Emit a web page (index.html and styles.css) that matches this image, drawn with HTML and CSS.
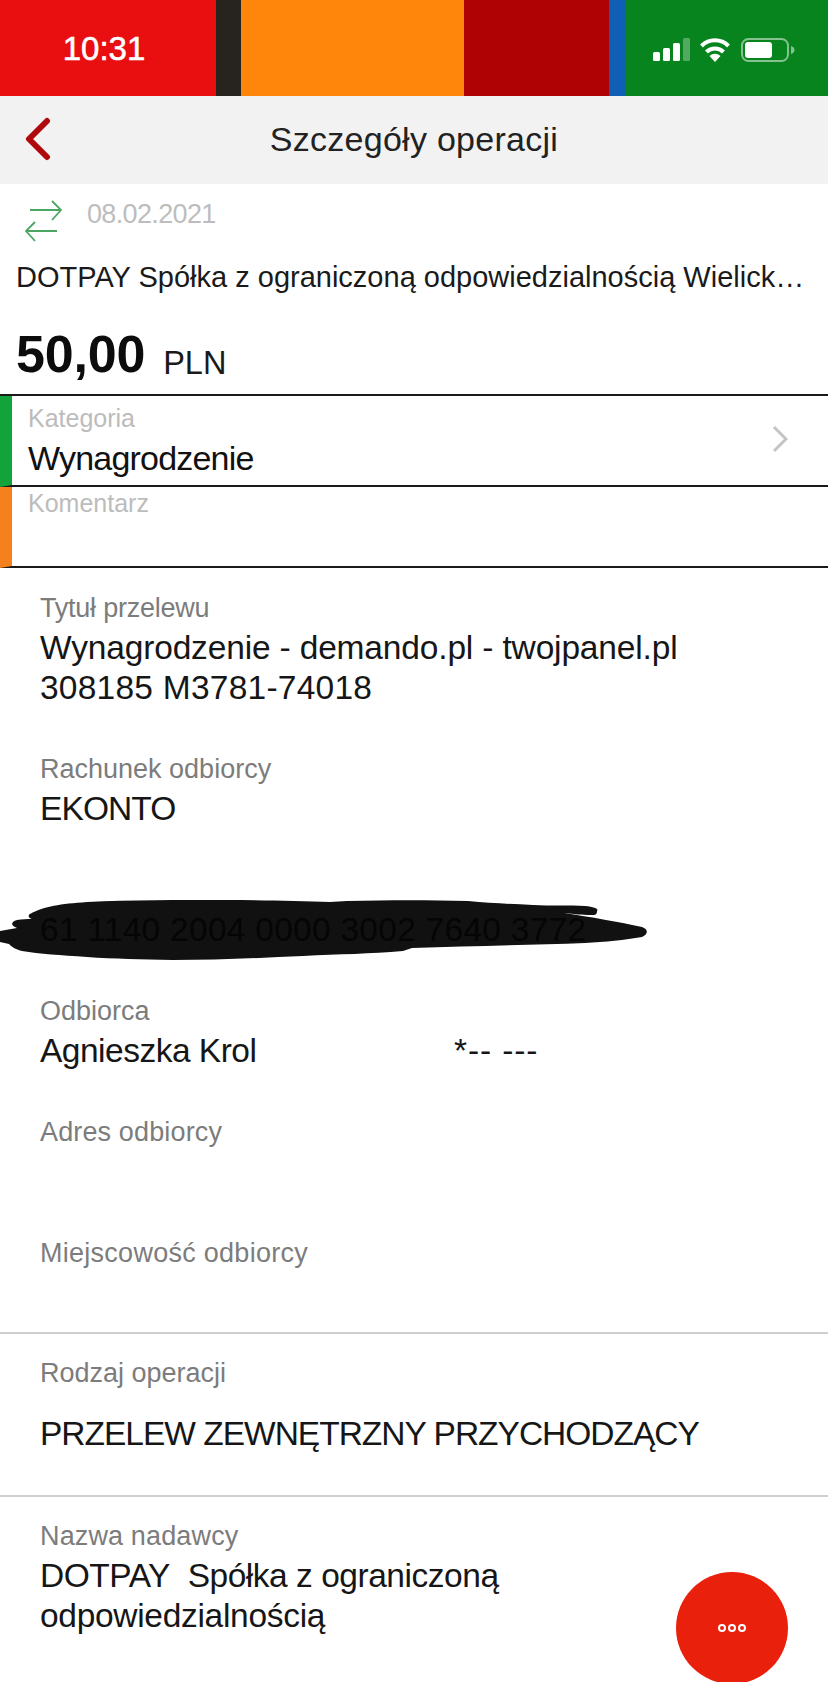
FILE: index.html
```html
<!DOCTYPE html>
<html lang="pl">
<head>
<meta charset="utf-8">
<title>Szczegóły operacji</title>
<link rel="stylesheet" href="styles.css">
</head>
<body>
<div class="screen">
  <header class="status">
    <div class="st st-red"><span class="time">10:31</span></div>
    <div class="st st-dark"></div>
    <div class="st st-orange"></div>
    <div class="st st-maroon"></div>
    <div class="st st-blue"></div>
    <div class="st st-green">
      <svg class="status-icons" width="175" height="30" viewBox="0 0 175 30">
        <g fill="#fff">
          <rect x="0" y="14" width="7" height="9" rx="1.500"/>
          <rect x="10" y="10" width="7" height="13" rx="1.500"/>
          <rect x="20" y="5" width="7" height="18" rx="1.500"/>
          <rect x="30" y="0" width="7" height="23" rx="1.500" opacity=".3"/>
        </g>
        <g fill="none" stroke="#fff" stroke-width="4">
          <path d="M48.500 8a19 19 0 0 1 27 0"/>
          <path d="M53.500 14a12 12 0 0 1 17 0"/>
        </g>
        <path d="M56.500 18a8 8 0 0 1 11 0L62 24z" fill="#fff"/>
        <rect x="89" y="1" width="46" height="22" rx="6.500" fill="none" stroke="#fff" stroke-opacity=".5" stroke-width="2"/>
        <rect x="92" y="4" width="27" height="16" rx="3" fill="#fff"/>
        <path d="M138 8c2.500 .8 3.500 2.200 3.500 4s-1 3.200-3.500 4z" fill="#fff" fill-opacity=".5"/>
      </svg>
    </div>
  </header>

  <nav class="navbar">
    <svg class="back" width="28" height="44" viewBox="0 0 28 44"><path d="M24 4 6 22l18 18" fill="none" stroke="#b0090d" stroke-width="6" stroke-linecap="round" stroke-linejoin="round"/></svg>
    <h1 class="nav-title">Szczegóły operacji</h1>
  </nav>

  <section class="summary">
    <div class="date-row">
      <svg class="swap" width="38" height="44" viewBox="0 0 38 44"><g fill="none" stroke="#4da564" stroke-width="1.800"><path d="M5 10h31M27 1l9 9-9 10" /><path d="M32 31H1M10 22l-9 9 9 10"/></g></svg>
      <span class="date">08.02.2021</span>
    </div>
    <div class="payee">DOTPAY Spółka z ograniczoną odpowiedzialnością Wielick…</div>
    <div class="amount"><strong class="amount-num">50,00</strong><span class="amount-cur">PLN</span></div>
  </section>

  <section class="tag tag-cat">
    <div class="tag-label">Kategoria</div>
    <div class="tag-value">Wynagrodzenie</div>
    <svg class="chev" width="16" height="28" viewBox="0 0 16 28"><path d="M2 2l12 12L2 26" fill="none" stroke="#c4c4c4" stroke-width="3"/></svg>
  </section>
  <section class="tag tag-com">
    <div class="tag-label">Komentarz</div>
  </section>

  <section class="details">
    <div class="field">
      <div class="label ls-title">Tytuł przelewu</div>
      <div class="value"><span class="ls-tight-1">Wynagrodzenie - demando.pl - twojpanel.pl</span><br><span class="ls-digits">308185 M3781-74018</span></div>
    </div>
    <div class="field">
      <div class="label">Rachunek odbiorcy</div>
      <div class="value ls-caps">EKONTO</div>
    </div>
    <div class="field redacted">
      <svg class="blob" width="660" height="70" viewBox="0 0 660 70"><path d="M30 18C45 10 60 8 87 6C130 4 180 4 225 4C260 4 300 5 330 6L347 5C390 4 430 4 468 5C490 7 510 8 533 9C550 10 570 9 585 10C595 11 599 13 597 15C597 19 595 19 592 19C580 19 575 18 564 17C590 21 620 26 642 31C648 33 649 38 642 41C625 44 605 46 585 47C530 49 470 50 412 52L403 55C370 58 340 58 303 60C260 62 215 64 173 64C140 63 115 63 87 61C60 59 40 58 22 55C14 53 11 50 9 48L0 46V35L17 32C11 30 10 26 17 24C22 23 27 23 32 23C28 22 28 19 30 18Z" fill="#111"/></svg>
      <div class="value acct">61 1140 2004 0000 3002 7640 3772</div>
    </div>
    <div class="field">
      <div class="label">Odbiorca</div>
      <div class="value value-split"><span class="v-name">Agnieszka Krol</span><span class="v-mask">*-- ---</span></div>
    </div>
    <div class="field">
      <div class="label ls-open">Adres odbiorcy</div>
      <div class="value"></div>
    </div>
    <div class="field">
      <div class="label ls-open-2">Miejscowość odbiorcy</div>
      <div class="value"></div>
    </div>
  </section>

  <section class="block">
    <div class="label">Rodzaj operacji</div>
    <div class="value value-gap ls-op">PRZELEW ZEWNĘTRZNY PRZYCHODZĄCY</div>
  </section>

  <section class="block block-last">
    <div class="label ls-open">Nazwa nadawcy</div>
    <div class="value"><span class="ls-tight-2">DOTPAY&nbsp; Spółka z ograniczoną</span><br><span class="ls-tight-3">odpowiedzialnością</span></div>
  </section>

  <button class="fab" aria-label="Więcej"><span class="dot"></span><span class="dot"></span><span class="dot"></span></button>
</div>
</body>
</html>
```
FILE: styles.css
```css
* { box-sizing: border-box; }
html, body { margin: 0; padding: 0; background: #fff; }
body { font-family: "Liberation Sans", Arial, sans-serif; color: #111; }
.screen { position: relative; width: 828px; height: 1682px; overflow: hidden; background: #fff; }

.status { display: flex; height: 96px; }
.st { height: 100%; }
.st-red { width: 216px; background: #e90e10; display: flex; align-items: center; justify-content: center; padding-top: 2px; padding-right: 8px; }
.st-dark { width: 25px; background: #27241f; }
.st-orange { width: 223px; background: #ff860a; }
.st-maroon { width: 145px; background: #ae0205; }
.st-blue { width: 16px; background: #0f5fb5; }
.st-green { flex: 1; background: #08841e; padding: 38px 0 0 28px; }
.time { color: #fff; font-size: 33px; font-weight: 400; -webkit-text-stroke: .6px #fff; }
.status-icons { display: block; }

.navbar { height: 88px; background: #f2f2f2; display: flex; align-items: center; justify-content: center; position: relative; }
.nav-title { margin: 0 0 2px; font-size: 34px; font-weight: 400; color: #222; letter-spacing: .27px; }
.back { position: absolute; left: 23px; top: 21px; }

.summary { height: 212px; padding: 16px 0 0 0; border-bottom: 2px solid #1a1a1a; }
.date-row { display: flex; align-items: flex-start; height: 44px; padding-left: 25px; gap: 24px; }
.date { font-size: 27px; line-height: 28px; color: #bdbdbd; letter-spacing: -.65px; }
.payee { margin-top: 15px; padding-left: 16px; font-size: 29px; line-height: 36px; color: #1a1a1a; white-space: nowrap; }
.amount { margin-top: 29px; padding-left: 16px; display: flex; align-items: baseline; gap: 18px; line-height: 60px; }
.amount-num { font-size: 52px; font-weight: 700; color: #0c0c0c; letter-spacing: -.2px; }
.amount-cur { font-size: 32.500px; color: #1a1a1a; position: relative; top: 2px; }

.tag { position: relative; border-left: 12px solid; border-bottom: 2px solid #1a1a1a; padding-left: 16px; }
.tag-cat { height: 91px; border-left-color: #12a33b; }
.tag-com { height: 81px; border-left-color: #f5811e; }
.tag-com .tag-label { padding-top: 1px; }
.tag-label { font-size: 25px; line-height: 30px; color: #bcbcbc; }
.tag-cat .tag-label { padding-top: 7px; height: 37px; }
.tag-value { font-size: 34px; line-height: 40px; color: #111; margin-top: 5px; letter-spacing: -.8px; }
.chev { position: absolute; right: 40px; top: 29px; }

.details { padding: 20px 0 0 40px; height: 766px; display: flex; flex-direction: column; gap: 41px; border-bottom: 2px solid #cfcfcf; }
.label { font-size: 27px; line-height: 40px; color: #7c7c7c; }
.value { font-size: 33.500px; line-height: 40px; min-height: 40px; color: #161616; }
.ls-title { letter-spacing: -.23px; }
.ls-open { letter-spacing: .14px; }
.ls-open-2 { letter-spacing: .27px; }
.ls-tight-1 { letter-spacing: -.16px; }
.ls-tight-2 { letter-spacing: -.47px; }
.ls-tight-3 { letter-spacing: -.3px; }
.ls-digits { letter-spacing: .24px; }
.ls-caps { letter-spacing: -.9px; }
.ls-op { letter-spacing: -1px; }
.value-split { display: flex; }
.v-name { width: 414px; letter-spacing: -.5px; }
.v-mask { letter-spacing: .9px; }
.redacted { position: relative; margin-top: 40px; }
.acct { position: relative; color: #050505; letter-spacing: .27px; }
.blob { position: absolute; left: -40px; top: -14px; }

.block { padding: 19px 0 0 40px; height: 163px; border-bottom: 2px solid #cfcfcf; }
.block-last { border-bottom: 0; }
.value-gap { margin-top: 21px; }

.fab { position: absolute; left: 676px; top: 1572px; width: 112px; height: 112px; border-radius: 50%; border: 0; padding: 0; background: #e8200c; display: flex; align-items: center; justify-content: center; gap: 2px; }
.dot { width: 8px; height: 8px; border: 2px solid #fff; border-radius: 50%; }
```
